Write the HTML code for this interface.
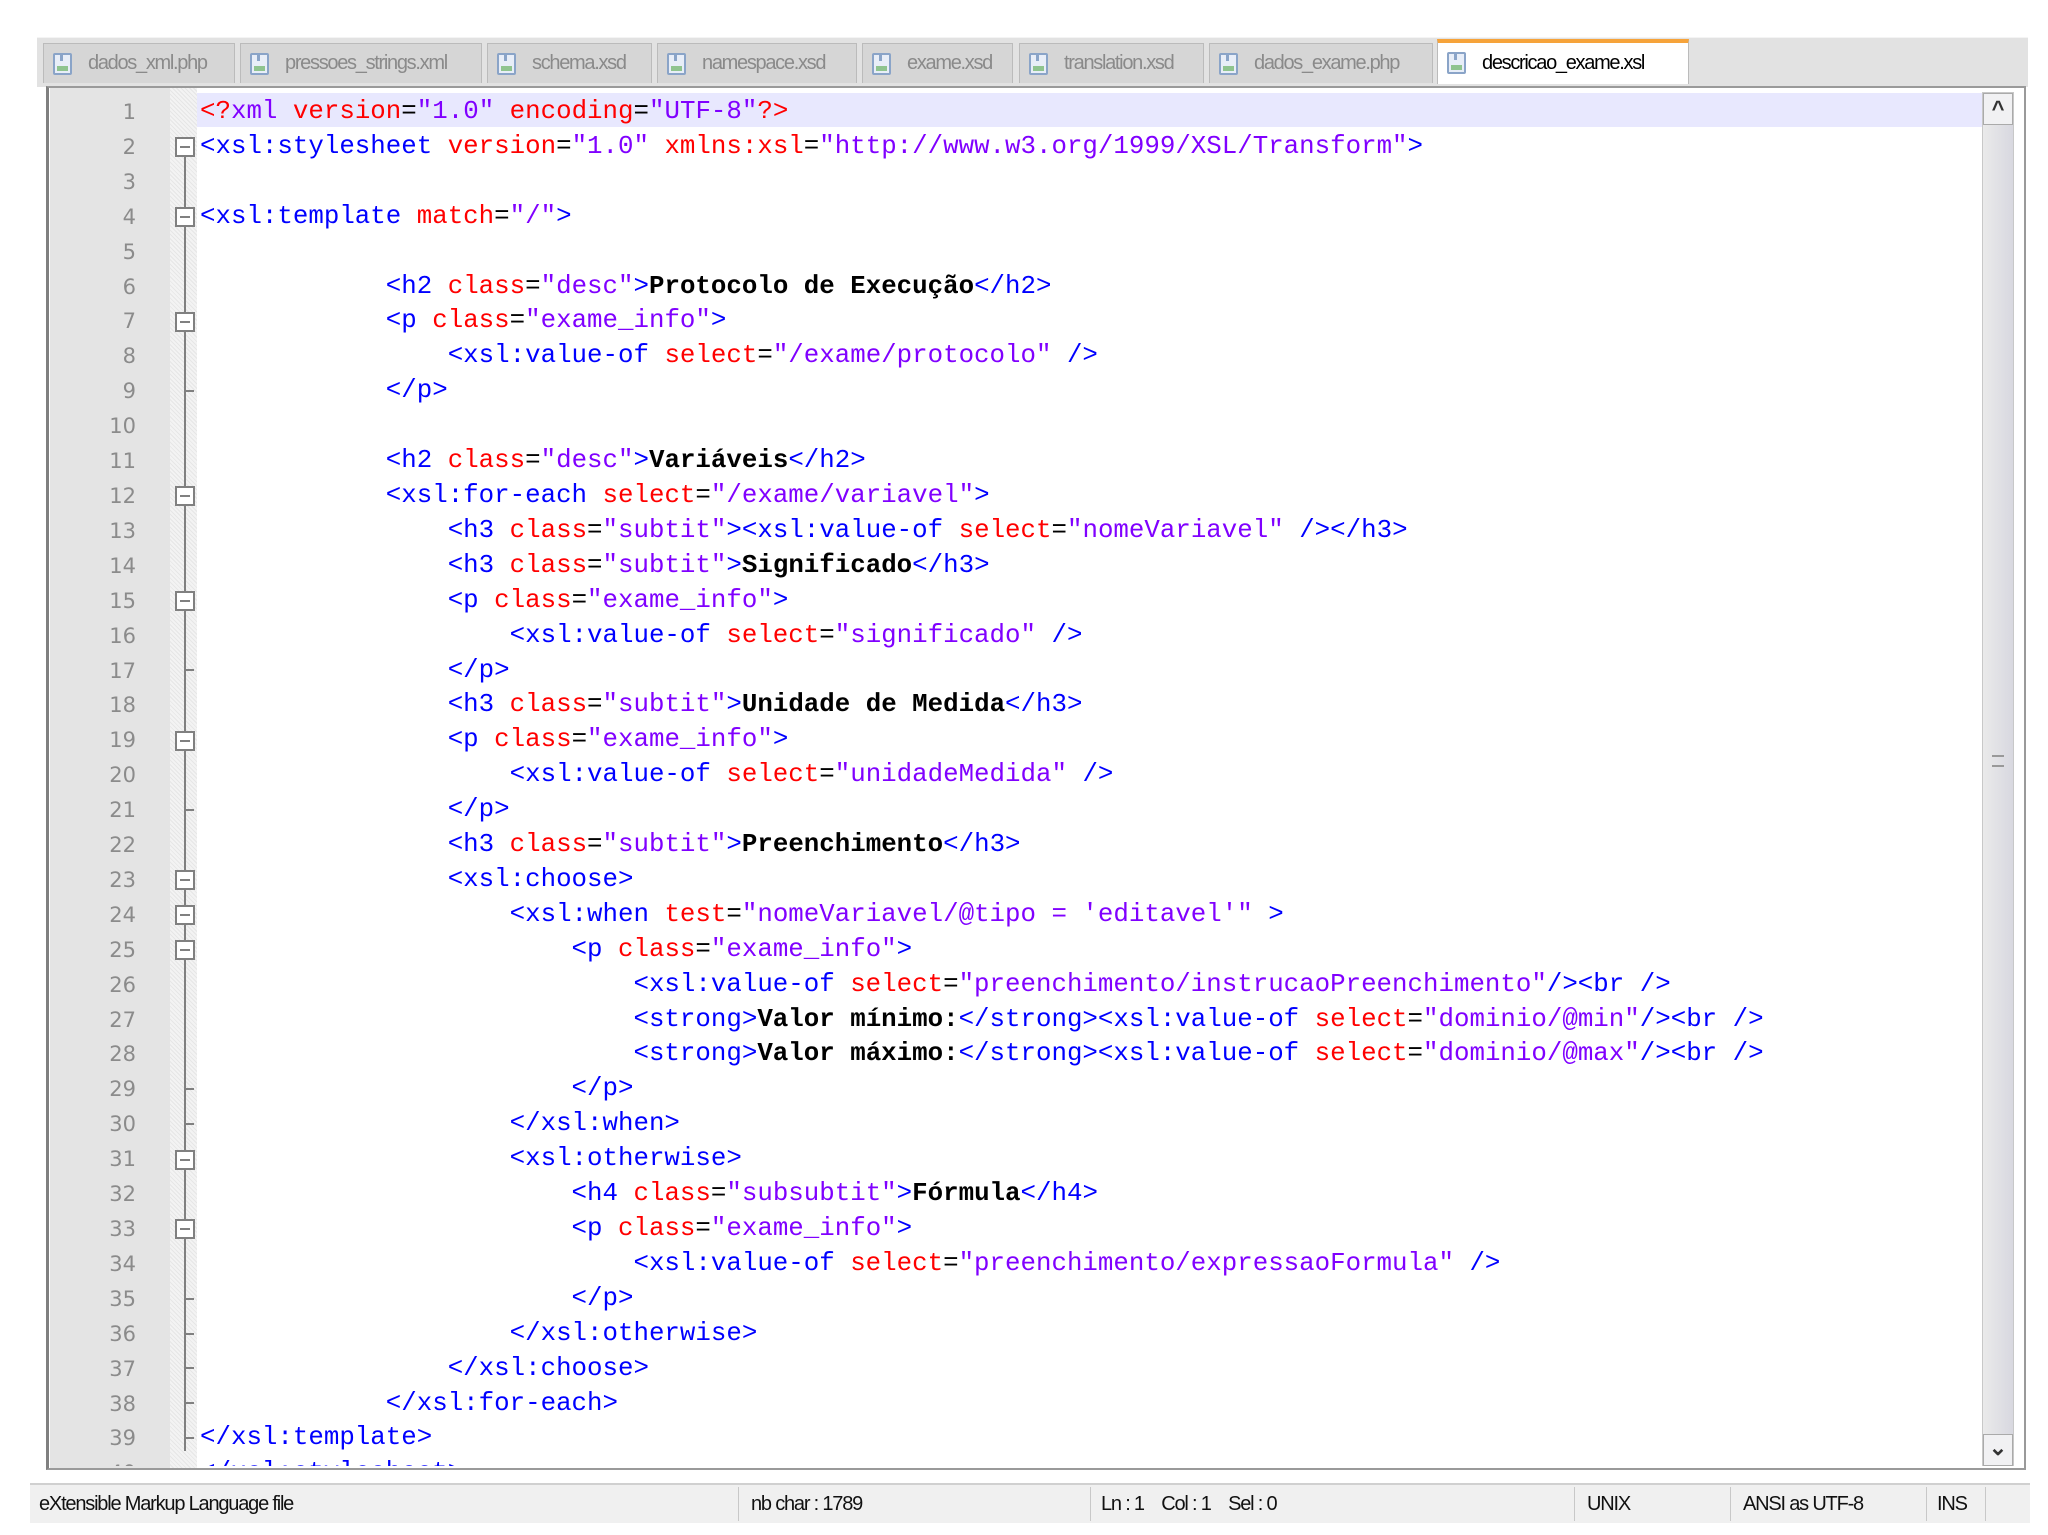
<!DOCTYPE html>
<html><head><meta charset="utf-8"><style>
*{margin:0;padding:0;box-sizing:border-box}
body{width:2048px;height:1535px;background:#fff;position:relative;overflow:hidden;font-family:"Liberation Sans",sans-serif}
.abs{position:absolute}
#tabbar{left:37px;top:37px;width:1991px;height:50px;background:#e2e2e2;border-top:1px solid #f4f4f4}
.tab{position:absolute;top:43px;height:40px;background:#d6d6d6;border:1px solid #bbb;border-bottom:none;color:#8a8a8a;font-size:20px;letter-spacing:-1.3px;line-height:38px;padding-left:44px;white-space:nowrap;overflow:hidden}
.tab .ic{position:absolute;left:9px;top:9px;width:19px;height:22px;border:2px solid #8aa4c8;border-radius:2px;background:#e8eef8}
.tab .ic:before{content:"";position:absolute;left:2px;right:2px;bottom:2px;height:5px;background:#8fc48f}
.tab .ic:after{content:"";position:absolute;left:5px;top:0;width:3px;height:6px;background:#8aa4c8}
.tab.act{background:#fff;color:#000;border-top:4px solid #f6a33a;top:39px;height:45px;line-height:40px}
#frame{left:46px;top:86px;width:1980px;height:1384px;background:#fff;border:2px solid #9a9a9a;border-left:3px solid #808080}
#gut{left:50px;top:88px;width:120px;height:1380px;background:#e4e4e4}
#fold{left:170px;top:88px;width:27px;height:1380px;background:repeating-linear-gradient(45deg,#f3f3f3 0 2px,#e6e6e6 2px 3px)}
#hl{left:197px;top:93px;width:1785px;height:34px;background:#e8e8fe}
#nums{left:50px;top:95px;width:86px;height:1371px;overflow:hidden;text-align:right;color:#8b8b8b;font-family:"DejaVu Sans",sans-serif;font-size:21px;line-height:34.9px;white-space:pre}
#code{left:200px;top:95px;width:1780px;height:1371px;overflow:hidden;font-family:"Liberation Mono",monospace;font-size:25.8px;line-height:34.9px;white-space:pre;color:#000}
.t{color:#0000ff}.a{color:#ff0000}.v{color:#8000ff}.x{color:#000;font-weight:bold}
.vl{position:absolute;left:184px;width:2px;background:#808080}
.bx{position:absolute;left:175px;width:20px;height:20px;border:2px solid #808080;background:#fff}
.bx:after{content:"";position:absolute;left:3px;right:3px;top:7px;height:2px;background:#808080}
.tk{position:absolute;left:184px;width:10px;height:2px;background:#808080}
#sb{left:1982px;top:92px;width:32px;height:1374px;background:linear-gradient(90deg,#eaeaea,#d8d8e0);border:1px solid #c8c8c8}
.arr{position:absolute;left:1983px;width:30px;height:32px;background:#f1f1f3;border:1px solid #aaa;text-align:center;font-size:22px;line-height:30px;color:#333;font-weight:bold}
#status{left:30px;top:1483px;width:2000px;height:40px;background:#f0f0f0;border-top:2px solid #d0d0d0;font-size:20px;letter-spacing:-1.2px;color:#111;line-height:38px}
#status span{position:absolute;top:0}
.sep{position:absolute;top:2px;width:1px;height:34px;background:#c8c8c8}
</style></head><body>
<div id="tabbar" class="abs"></div>
<div class="tab" style="left:43px;width:192px"><i class="ic"></i>dados_xml.php</div>
<div class="tab" style="left:240px;width:242px"><i class="ic"></i>pressoes_strings.xml</div>
<div class="tab" style="left:487px;width:165px"><i class="ic"></i>schema.xsd</div>
<div class="tab" style="left:657px;width:200px"><i class="ic"></i>namespace.xsd</div>
<div class="tab" style="left:862px;width:151px"><i class="ic"></i>exame.xsd</div>
<div class="tab" style="left:1019px;width:185px"><i class="ic"></i>translation.xsd</div>
<div class="tab" style="left:1209px;width:224px"><i class="ic"></i>dados_exame.php</div>
<div class="tab act" style="left:1437px;width:252px"><i class="ic"></i>descricao_exame.xsl</div>

<div id="frame" class="abs"></div>
<div id="gut" class="abs"></div>
<div id="fold" class="abs"></div>
<div id="hl" class="abs"></div>
<div id="sb" class="abs"></div>
<div class="arr" style="top:93px">&#94;</div>
<div class="arr" style="top:1434px;line-height:26px">&#8964;</div>
<div class="abs" style="left:1992px;top:755px;width:12px;height:12px;border-top:2px solid #999;border-bottom:2px solid #999"></div>

<div class="vl" style="top:157px;height:1294px"></div>
<div class="bx" style="top:137.4px"></div>
<div class="bx" style="top:207.2px"></div>
<div class="bx" style="top:311.9px"></div>
<div class="bx" style="top:486.4px"></div>
<div class="bx" style="top:591.1px"></div>
<div class="bx" style="top:730.7px"></div>
<div class="bx" style="top:870.3px"></div>
<div class="bx" style="top:905.2px"></div>
<div class="bx" style="top:940.1px"></div>
<div class="bx" style="top:1149.5px"></div>
<div class="bx" style="top:1219.3px"></div>
<div class="tk" style="top:390.2px"></div>
<div class="tk" style="top:669.4px"></div>
<div class="tk" style="top:809px"></div>
<div class="tk" style="top:1088.2px"></div>
<div class="tk" style="top:1123.1px"></div>
<div class="tk" style="top:1297.6px"></div>
<div class="tk" style="top:1332.5px"></div>
<div class="tk" style="top:1367.4px"></div>
<div class="tk" style="top:1402.3px"></div>
<div class="tk" style="top:1437.2px"></div>

<div id="nums" class="abs">1
2
3
4
5
6
7
8
9
10
11
12
13
14
15
16
17
18
19
20
21
22
23
24
25
26
27
28
29
30
31
32
33
34
35
36
37
38
39
40</div>

<div id="code" class="abs"><span class="a">&lt;?</span><span class="v">xml</span> <span class="a">version</span>=<span class="v">"1.0"</span> <span class="a">encoding</span>=<span class="v">"UTF-8"</span><span class="a">?&gt;</span>
<span class="t">&lt;xsl:stylesheet</span> <span class="a">version</span>=<span class="v">"1.0"</span> <span class="a">xmlns:xsl</span>=<span class="v">"http://www.w3.org/1999/XSL/Transform"</span><span class="t">&gt;</span>

<span class="t">&lt;xsl:template</span> <span class="a">match</span>=<span class="v">"/"</span><span class="t">&gt;</span>

            <span class="t">&lt;h2</span> <span class="a">class</span>=<span class="v">"desc"</span><span class="t">&gt;</span><span class="x">Protocolo de Execução</span><span class="t">&lt;/h2&gt;</span>
            <span class="t">&lt;p</span> <span class="a">class</span>=<span class="v">"exame_info"</span><span class="t">&gt;</span>
                <span class="t">&lt;xsl:value-of</span> <span class="a">select</span>=<span class="v">"/exame/protocolo"</span> <span class="t">/&gt;</span>
            <span class="t">&lt;/p&gt;</span>

            <span class="t">&lt;h2</span> <span class="a">class</span>=<span class="v">"desc"</span><span class="t">&gt;</span><span class="x">Variáveis</span><span class="t">&lt;/h2&gt;</span>
            <span class="t">&lt;xsl:for-each</span> <span class="a">select</span>=<span class="v">"/exame/variavel"</span><span class="t">&gt;</span>
                <span class="t">&lt;h3</span> <span class="a">class</span>=<span class="v">"subtit"</span><span class="t">&gt;&lt;xsl:value-of</span> <span class="a">select</span>=<span class="v">"nomeVariavel"</span> <span class="t">/&gt;&lt;/h3&gt;</span>
                <span class="t">&lt;h3</span> <span class="a">class</span>=<span class="v">"subtit"</span><span class="t">&gt;</span><span class="x">Significado</span><span class="t">&lt;/h3&gt;</span>
                <span class="t">&lt;p</span> <span class="a">class</span>=<span class="v">"exame_info"</span><span class="t">&gt;</span>
                    <span class="t">&lt;xsl:value-of</span> <span class="a">select</span>=<span class="v">"significado"</span> <span class="t">/&gt;</span>
                <span class="t">&lt;/p&gt;</span>
                <span class="t">&lt;h3</span> <span class="a">class</span>=<span class="v">"subtit"</span><span class="t">&gt;</span><span class="x">Unidade de Medida</span><span class="t">&lt;/h3&gt;</span>
                <span class="t">&lt;p</span> <span class="a">class</span>=<span class="v">"exame_info"</span><span class="t">&gt;</span>
                    <span class="t">&lt;xsl:value-of</span> <span class="a">select</span>=<span class="v">"unidadeMedida"</span> <span class="t">/&gt;</span>
                <span class="t">&lt;/p&gt;</span>
                <span class="t">&lt;h3</span> <span class="a">class</span>=<span class="v">"subtit"</span><span class="t">&gt;</span><span class="x">Preenchimento</span><span class="t">&lt;/h3&gt;</span>
                <span class="t">&lt;xsl:choose&gt;</span>
                    <span class="t">&lt;xsl:when</span> <span class="a">test</span>=<span class="v">"nomeVariavel/@tipo = 'editavel'"</span> <span class="t">&gt;</span>
                        <span class="t">&lt;p</span> <span class="a">class</span>=<span class="v">"exame_info"</span><span class="t">&gt;</span>
                            <span class="t">&lt;xsl:value-of</span> <span class="a">select</span>=<span class="v">"preenchimento/instrucaoPreenchimento"</span><span class="t">/&gt;&lt;br /&gt;</span>
                            <span class="t">&lt;strong&gt;</span><span class="x">Valor mínimo:</span><span class="t">&lt;/strong&gt;&lt;xsl:value-of</span> <span class="a">select</span>=<span class="v">"dominio/@min"</span><span class="t">/&gt;&lt;br /&gt;</span>
                            <span class="t">&lt;strong&gt;</span><span class="x">Valor máximo:</span><span class="t">&lt;/strong&gt;&lt;xsl:value-of</span> <span class="a">select</span>=<span class="v">"dominio/@max"</span><span class="t">/&gt;&lt;br /&gt;</span>
                        <span class="t">&lt;/p&gt;</span>
                    <span class="t">&lt;/xsl:when&gt;</span>
                    <span class="t">&lt;xsl:otherwise&gt;</span>
                        <span class="t">&lt;h4</span> <span class="a">class</span>=<span class="v">"subsubtit"</span><span class="t">&gt;</span><span class="x">Fórmula</span><span class="t">&lt;/h4&gt;</span>
                        <span class="t">&lt;p</span> <span class="a">class</span>=<span class="v">"exame_info"</span><span class="t">&gt;</span>
                            <span class="t">&lt;xsl:value-of</span> <span class="a">select</span>=<span class="v">"preenchimento/expressaoFormula"</span> <span class="t">/&gt;</span>
                        <span class="t">&lt;/p&gt;</span>
                    <span class="t">&lt;/xsl:otherwise&gt;</span>
                <span class="t">&lt;/xsl:choose&gt;</span>
            <span class="t">&lt;/xsl:for-each&gt;</span>
<span class="t">&lt;/xsl:template&gt;</span>
<span class="t">&lt;/xsl:stylesheet&gt;</span></div>

<div id="status" class="abs">
<span style="left:9px">eXtensible Markup Language file</span>
<i class="sep" style="left:708px"></i>
<span style="left:721px">nb char : 1789</span>
<i class="sep" style="left:1060px"></i>
<span style="left:1071px">Ln : 1 &nbsp;&nbsp; Col : 1 &nbsp;&nbsp; Sel : 0</span>
<i class="sep" style="left:1544px"></i>
<span style="left:1557px">UNIX</span>
<i class="sep" style="left:1700px"></i>
<span style="left:1713px">ANSI as UTF-8</span>
<i class="sep" style="left:1896px"></i>
<span style="left:1907px">INS</span>
<i class="sep" style="left:1955px"></i>
</div>
</body></html>
